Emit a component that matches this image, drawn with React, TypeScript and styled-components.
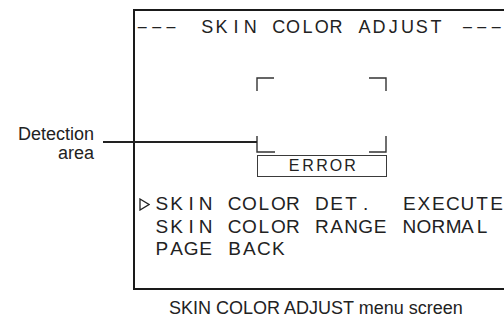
import { FC } from "react";
import styled, { createGlobalStyle } from "styled-components";

const GlobalStyle = createGlobalStyle`
  html, body {
    margin: 0;
    padding: 0;
    background: #ffffff;
    overflow: hidden;
  }
`;

const Page = styled.div`
  position: relative;
  width: 504px;
  height: 320px;
  overflow: hidden;
  font-family: "Liberation Sans", Arial, sans-serif;
  color: #222222;
`;

const Main = styled.div`
  display: flex;
  padding-top: 9px;
`;

const Side = styled.div`
  width: 133px;
  flex-shrink: 0;
  box-sizing: border-box;
  padding: 116px 39px 0 0;
  text-align: right;
  font-size: 18px;
  line-height: 19px;
`;

const Screen = styled.div`
  width: 420px;
  height: 281px;
  flex-shrink: 0;
  box-sizing: border-box;
  border: 2px solid #1a1a1a;
  display: flex;
  flex-direction: column;
`;

const TitleRow = styled.div`
  display: flex;
  margin-top: 6px;
  font-size: 18px;
  line-height: 20px;
`;

const Group = styled.div<{ $gap: number }>`
  display: flex;
  margin-left: ${(p) => p.$gap}px;
`;

const Cell = styled.span<{ $pitch: number; $size?: number }>`
  display: inline-block;
  width: ${(p) => p.$pitch}px;
  text-align: center;
  font-size: ${(p) => (p.$size ? `${p.$size}px` : "inherit")};
  white-space: pre;
`;

const DetectArea = styled.svg`
  display: block;
  margin: 40px 0 0 121px;
`;

const ErrorBox = styled.div`
  width: 130px;
  height: 22px;
  box-sizing: border-box;
  margin-left: 122px;
  border: 1px solid #3a3a3a;
  display: flex;
  justify-content: center;
  font-size: 16px;
  line-height: 20px;
`;

const Menu = styled.div`
  margin-top: 16px;
  font-size: 19px;
  line-height: 22.7px;
`;

const MenuRow = styled.div`
  display: flex;
  align-items: center;
`;

const Marker = styled.div`
  width: 19.7px;
  height: 22.7px;
  flex-shrink: 0;
  display: flex;
  align-items: center;
  padding-left: 4px;
  box-sizing: border-box;
`;

const Caption = styled.div`
  margin-top: 8px;
  padding-left: 169px;
  font-size: 18px;
  line-height: 20px;
`;

const Leader = styled.div`
  position: absolute;
  top: 141px;
  left: 103px;
  width: 154px;
  height: 1.5px;
  background: #222222;
`;

interface MonoProps {
  text: string;
  pitch: number;
  size?: number;
}

const Mono: FC<MonoProps> = ({ text, pitch, size }) => (
  <>
    {text.split("").map((ch, i) => (
      <Cell key={i} $pitch={pitch} $size={size}>
        {ch}
      </Cell>
    ))}
  </>
);

const Cursor: FC = () => (
  <svg width="11" height="13" viewBox="0 0 11 13">
    <polygon points="1,1 10,6.5 1,12" fill="none" stroke="#222" strokeWidth="1.3" />
  </svg>
);

const menuItems = [
  { text: "SKIN COLOR DET.  EXECUTE", active: true },
  { text: "SKIN COLOR RANGE NORMAL", active: false },
  { text: "PAGE BACK", active: false },
];

const App: FC = () => {
  return (
    <Page>
      <GlobalStyle />
      <Main>
        <Side>
          Detection
          <br />
          area
        </Side>
        <Screen>
          <TitleRow>
            <Group $gap={0}>
              <Mono text="–––" pitch={14.4} size={16} />
            </Group>
            <Group $gap={22}>
              <Mono text="SKIN COLOR ADJUST" pitch={14.3} />
            </Group>
            <Group $gap={17}>
              <Mono text="–––" pitch={14.4} size={16} />
            </Group>
          </TitleRow>
          <DetectArea width="132" height="78" viewBox="0 0 132 78">
            <g fill="none" stroke="#333" strokeWidth="1.4">
              <polyline points="1,14 1,1 18,1" />
              <polyline points="113,1 130,1 130,14" />
              <polyline points="1,59 1,75 19,75" />
              <polyline points="113,75 130,75 130,59" />
            </g>
          </DetectArea>
          <ErrorBox>
            <Mono text="ERROR" pitch={14} />
          </ErrorBox>
          <Menu>
            {menuItems.map((item) => (
              <MenuRow key={item.text}>
                <Marker>{item.active && <Cursor />}</Marker>
                <Mono text={item.text} pitch={14.55} />
              </MenuRow>
            ))}
          </Menu>
        </Screen>
      </Main>
      <Caption>SKIN COLOR ADJUST menu screen</Caption>
      <Leader />
    </Page>
  );
};

export default App;
